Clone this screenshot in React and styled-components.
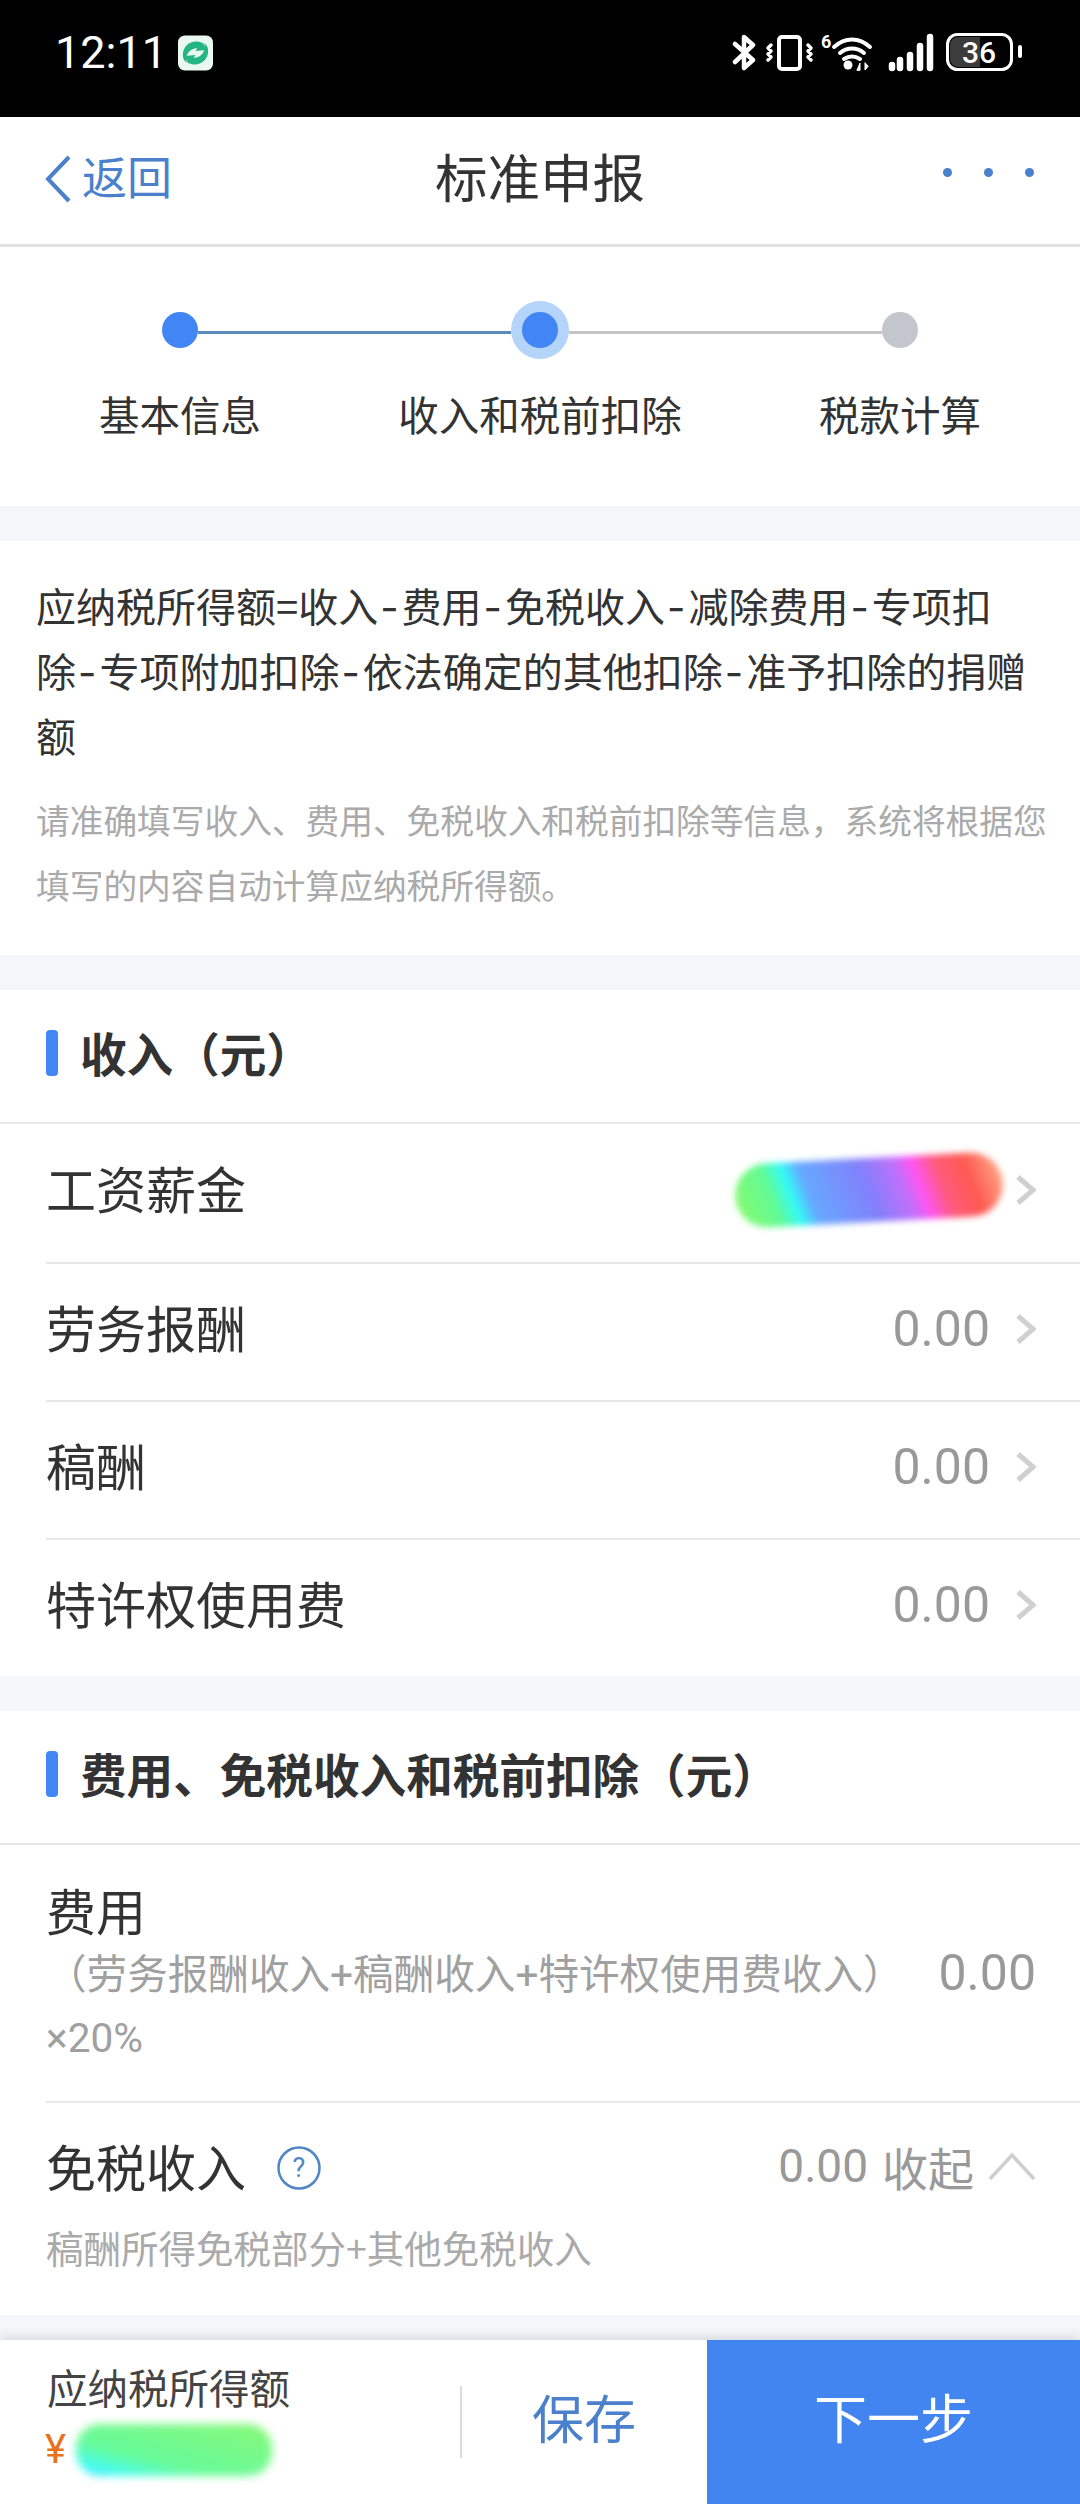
import {Fragment} from 'react'
import styled, {createGlobalStyle} from 'styled-components'

const GlobalStyle = createGlobalStyle`
  html, body {
    margin: 0;
    padding: 0;
    background: #f4f6f9;
  }
  * {
    box-sizing: border-box;
  }
`

const incomeRows = [
  {label: '工资薪金', masked: true},
  {label: '劳务报酬', value: '0.00'},
  {label: '稿酬', value: '0.00'},
  {label: '特许权使用费', value: '0.00'},
]

const formula = '应纳税所得额=收入-费用-免税收入-减除费用-专项扣除-专项附加扣除-依法确定的其他扣除-准予扣除的捐赠额'

const AppBadge = () => (
  <svg width="35" height="36" viewBox="0 0 36 36">
    <rect width="36" height="36" rx="7" fill="#eaf8f2" />
    <path d="M26 8C16 3 5 9 5 20c0 3 1 6 4 8-2-7 2-15 11-15l-2 3 11-1z" fill="#25b585" />
    <path d="M26 8C16 3 5 9 5 20c0 3 1 6 4 8-2-7 2-15 11-15l-2 3 11-1z" fill="#25b585" transform="rotate(180 18 18)" />
  </svg>
)

const StatusIcons = () => (
  <svg width="292" height="42" viewBox="0 0 292 42" fill="none" stroke="#fff" strokeLinecap="round" strokeLinejoin="round">
    {/* bluetooth */}
    <path d="M3 12l18 16-9 8V5l9 8L3 30" strokeWidth="4.5" />
    {/* vibrate */}
    <rect x="47" y="5" width="21" height="32" rx="3" strokeWidth="4" />
    <path d="M39 13l-3 3 3 3-3 3 3 3-3 3M76 13l3 3-3 3 3 3-3 3 3 3" strokeWidth="3.5" />
    {/* wifi 6 */}
    <text x="89" y="16" fill="#fff" stroke="none" fontSize="18" fontWeight="700" fontFamily="Roboto, sans-serif">6</text>
    <path d="M102 15c11-10 25-10 36 0M108 21c7-6 17-6 24 0M112 27c5-3 11-3 16 0" strokeWidth="4" />
    <circle cx="116" cy="33" r="4.5" fill="#fff" stroke="none" />
    <path d="M125 38l3-7v7zM133 31v7l3-3.5z" fill="#fff" strokeWidth="1" />
    {/* signal */}
    <path d="M160 33v3M168 28v8M178 23v13M188 14v22M198 5v31" strokeWidth="6.5" />
    {/* battery */}
    <rect x="215.5" y="2.5" width="64" height="35" rx="10" strokeWidth="3" />
    <path d="M226 5h22v30h-22a8 8 0 0 1-8-8V13a8 8 0 0 1 8-8z" fill="#3c3c3c" stroke="none" />
    <text x="230" y="31" fill="#fff" stroke="none" fontSize="30" fontWeight="500" fontFamily="Roboto, sans-serif">36</text>
    <path d="M288 15v9" strokeWidth="4" />
  </svg>
)

const BackIcon = () => (
  <svg width="28" height="48" viewBox="0 0 28 48" fill="none" stroke="#4a80cc" strokeWidth="4">
    <path d="M25 2L4 24l21 22" />
  </svg>
)

const Chevron = () => (
  <svg width="20" height="32" viewBox="0 0 20 32" fill="none" stroke="#d0d0d0" strokeWidth="5">
    <path d="M2 3l15 13L2 29" />
  </svg>
)

const ChevronUp = () => (
  <svg width="48" height="30" viewBox="0 0 48 30" fill="none" stroke="#cfcfcf" strokeWidth="3.5">
    <path d="M2 28L24 4l22 24" />
  </svg>
)

const HelpIcon = () => (
  <svg width="44" height="44" viewBox="0 0 44 44">
    <circle cx="22" cy="22" r="20.5" fill="none" stroke="#4f86c6" strokeWidth="2.5" />
    <text x="22" y="31" textAnchor="middle" fill="#4f86c6" fontSize="27" fontFamily="Roboto, sans-serif">?</text>
  </svg>
)

export default function App() {
  return (
    <Page>
      <GlobalStyle />
      <StatusBar>
        <Clock>
          <Time>12:11</Time>
          <AppBadge />
        </Clock>
        <StatusIcons />
      </StatusBar>

      <NavBar>
        <BackLink>
          <BackIcon />
          <span>返回</span>
        </BackLink>
        <NavTitle>标准申报</NavTitle>
        <MoreDots>
          <Dot />
          <Dot />
          <Dot />
        </MoreDots>
      </NavBar>

      <Steps>
        <StepTrack>
          <StepDot />
          <StepLine $done />
          <StepCurrent>
            <StepDot />
          </StepCurrent>
          <StepLine />
          <StepDot $idle />
        </StepTrack>
        <StepLabels>
          <span>基本信息</span>
          <span>收入和税前扣除</span>
          <span>税款计算</span>
        </StepLabels>
      </Steps>

      <Formula>
        <FormulaText>
          {formula.split('-').map((part, i) => (
            <Fragment key={part}>
              {i > 0 && <Dash>-</Dash>}
              {part}
            </Fragment>
          ))}
        </FormulaText>
        <FormulaHint>
          请准确填写收入、费用、免税收入和税前扣除等信息，系统将根据您填写的内容自动计算应纳税所得额。
        </FormulaHint>
      </Formula>

      <Section>
        <SectionHead>
          <SectionMark />
          <h3>收入（元）</h3>
        </SectionHead>
        {incomeRows.map((row) => (
          <Row key={row.label}>
            <RowLabel>{row.label}</RowLabel>
            <RowRight>
              {row.masked ? <RowScribble /> : <RowValue>{row.value}</RowValue>}
              <Chevron />
            </RowRight>
          </Row>
        ))}
      </Section>

      <Section>
        <SectionHead>
          <SectionMark />
          <h3>费用、免税收入和税前扣除（元）</h3>
        </SectionHead>
        <CostRow>
          <CostText>
            <RowLabel>费用</RowLabel>
            <CostNote>（劳务报酬收入+稿酬收入+特许权使用费收入）×20%</CostNote>
          </CostText>
          <CostValue>0.00</CostValue>
        </CostRow>
        <FreeRow>
          <FreeTop>
            <FreeLabel>
              <RowLabel>免税收入</RowLabel>
              <HelpIcon />
            </FreeLabel>
            <FreeRight>
              <FreeValue>0.00</FreeValue>
              <span>收起</span>
              <ChevronUp />
            </FreeRight>
          </FreeTop>
          <FreeNote>稿酬所得免税部分+其他免税收入</FreeNote>
        </FreeRow>
      </Section>

      <Footer>
        <Total>
          <TotalLabel>应纳税所得额</TotalLabel>
          <TotalAmount>
            <Yen>¥</Yen>
            <TotalScribble />
          </TotalAmount>
        </Total>
        <SaveButton>
          <span>保存</span>
        </SaveButton>
        <NextButton>下一步</NextButton>
      </Footer>
    </Page>
  )
}

const Page = styled.div`
  display: flex;
  flex-direction: column;
  width: 1080px;
  height: 2504px;
  overflow: hidden;
  background: #f4f6f9;
  color: #333;
  font-family: "Noto Sans CJK SC", "Noto Sans", sans-serif;
`

const StatusBar = styled.div`
  display: flex;
  justify-content: space-between;
  align-items: flex-start;
  flex: 0 0 117px;
  padding: 32px 56px 0 55px;
  background: #000;
  color: #fff;
`

const Clock = styled.div`
  display: flex;
  align-items: center;
  gap: 11px;
`

const Time = styled.span`
  font-family: Roboto, sans-serif;
  font-size: 45px;
  line-height: 42px;
`

const NavBar = styled.div`
  display: flex;
  justify-content: space-between;
  align-items: center;
  flex: 0 0 130px;
  padding: 0 46px 4px 44px;
  background: #fff;
  border-bottom: 3px solid #e3e3e3;
`

const BackLink = styled.div`
  display: flex;
  align-items: center;
  gap: 10px;
  width: 240px;
  color: #4a80cc;
  font-size: 45px;
  line-height: 60px;

  span {
    padding-bottom: 6px;
  }
`

const NavTitle = styled.h1`
  margin: 0 0 8px 2px;
  font-size: 52.5px;
  font-weight: 400;
  line-height: 70px;
`

const MoreDots = styled.div`
  display: flex;
  justify-content: flex-end;
  gap: 32px;
  width: 240px;
  margin-top: -12px;
`

const Dot = styled.i`
  width: 9px;
  height: 9px;
  border-radius: 50%;
  background: #4a80cc;
`

const Steps = styled.div`
  flex: 0 0 259px;
  padding-top: 54px;
  background: #fff;
`

const StepTrack = styled.div`
  display: flex;
  align-items: center;
  height: 58px;
  padding: 0 162px;
`

const StepDot = styled.i`
  flex: none;
  width: 36px;
  height: 36px;
  border-radius: 50%;
  background: ${(p) => (p.$idle ? '#c3c6cc' : '#4285f4')};
`

const StepCurrent = styled.div`
  display: flex;
  flex: none;
  justify-content: center;
  align-items: center;
  width: 58px;
  height: 58px;
  border-radius: 50%;
  background: #b5d4f9;
`

const StepLine = styled.i`
  flex: 1;
  height: 3px;
  margin-top: 4px;
  background: ${(p) => (p.$done ? '#5a89bd' : '#c4c4c4')};
`

const StepLabels = styled.div`
  display: grid;
  grid-template-columns: repeat(3, 1fr);
  margin-top: 25px;
  font-size: 40.5px;
  line-height: 60px;
  text-align: center;
`

const Formula = styled.div`
  margin-top: 35px;
  padding: 32px 32px 38px 36px;
  background: #fff;
`

const FormulaText = styled.p`
  margin: 0;
  padding-right: 8px;
  font-size: 40px;
  line-height: 65px;
`

const Dash = styled.span`
  padding-left: 2px;
  font-family: Inter, sans-serif;
  letter-spacing: 3px;
  line-height: 1;
`

const FormulaHint = styled.p`
  margin: 19px 0 0;
  color: #aaa;
  font-size: 33.7px;
  line-height: 65px;
`

const Section = styled.div`
  margin-top: 35px;
  background: #fff;
`

const SectionHead = styled.div`
  display: flex;
  align-items: center;
  gap: 22px;
  height: 134px;
  padding: 0 0 6px 46px;
  border-bottom: 2px solid #e8e8e8;

  h3 {
    margin: 0;
    padding-bottom: 3px;
    font-size: 46.6px;
    font-weight: 700;
    line-height: 60px;
  }
`

const SectionMark = styled.i`
  width: 12px;
  height: 46px;
  border-radius: 4px;
  background: #4285f4;
`

const Row = styled.div`
  display: flex;
  justify-content: space-between;
  align-items: center;
  height: 138px;
  margin-left: 46px;
  padding: 0 44px 6px 0;
  border-top: 2px solid #e8e8e8;

  &:nth-child(2) {
    border-top: 0;
  }
`

const RowLabel = styled.div`
  padding-bottom: 6px;
  font-size: 50px;
  line-height: 64px;
`

const RowRight = styled.div`
  display: flex;
  align-items: center;
  gap: 26px;
`

const RowValue = styled.div`
  color: #999;
  font-family: Roboto, sans-serif;
  font-size: 50px;
  line-height: 64px;
`

const RowScribble = styled.div`
  width: 268px;
  height: 64px;
  margin-right: -13px;
  border-radius: 32px;
  filter: blur(3px);
  transform: rotate(-3deg);
  background: linear-gradient(
    72deg,
    #8cf96a 0%,
    #62fb94 16%,
    #33fbf7 23%,
    #66a8ff 29%,
    #8280fb 50%,
    #c070fb 62%,
    #ff55f2 68%,
    #ff5a7a 76%,
    #ff5a50 86%,
    #ff9c80 96%,
    #fff080 100%
  );
`

const CostRow = styled.div`
  display: flex;
  justify-content: space-between;
  height: 256px;
  margin-left: 46px;
  padding: 32px 44px 0 0;
`

const CostText = styled.div`
  width: 866px;
`

const CostNote = styled.div`
  margin-top: -3px;
  color: #a0a0a0;
  font-family: Roboto, "Noto Sans CJK SC", sans-serif;
  font-size: 40.6px;
  line-height: 63px;
`

const CostValue = styled.div`
  margin-top: 64px;
  color: #999;
  font-family: Roboto, sans-serif;
  font-size: 50px;
  line-height: 64px;
`

const FreeRow = styled.div`
  height: 214px;
  margin-left: 46px;
  padding: 30px 44px 0 0;
  border-top: 2px solid #e8e8e8;
`

const FreeTop = styled.div`
  display: flex;
  justify-content: space-between;
  align-items: center;
`

const FreeLabel = styled.div`
  display: flex;
  align-items: center;
  gap: 31px;
`

const FreeRight = styled.div`
  display: flex;
  align-items: center;
  gap: 14px;
  padding-bottom: 4px;
  color: #999;
  font-size: 46px;
`

const FreeValue = styled.div`
  font-family: Roboto, sans-serif;
  font-size: 46px;
  line-height: 64px;
`

const FreeNote = styled.div`
  margin-top: 19px;
  color: #aaa;
  font-size: 37.5px;
  line-height: 50px;
`

const Footer = styled.div`
  display: flex;
  flex: 0 0 164px;
  margin-top: auto;
  background: #fff;
  box-shadow: 0 -3px 10px rgba(60, 70, 90, 0.16);
`

const Total = styled.div`
  width: 460px;
  padding: 19px 0 0 47px;
`

const TotalLabel = styled.div`
  color: #444;
  font-size: 40.5px;
  line-height: 56px;
`

const TotalAmount = styled.div`
  display: flex;
  align-items: center;
  gap: 10px;
  margin-top: 7px;
  margin-left: -2px;
`

const Yen = styled.span`
  color: #e8721c;
  font-family: Roboto, sans-serif;
  font-size: 40px;
  line-height: 56px;
`

const TotalScribble = styled.div`
  width: 196px;
  height: 52px;
  border-radius: 24px;
  filter: blur(4px);
  background: linear-gradient(
    to top right,
    #6ea8f8 0%,
    #40fbfb 10%,
    #66fb9a 34%,
    #88f877 100%
  );
`

const SaveButton = styled.div`
  display: flex;
  flex: 1;
  align-items: center;
  justify-content: center;
  color: #4a80cc;
  font-size: 52px;

  &::before {
    content: '';
    width: 2px;
    height: 72px;
    margin-right: auto;
    background: #dcdcdc;
  }

  span {
    margin-right: 71px;
    padding-bottom: 12px;
  }
`

const NextButton = styled.div`
  display: flex;
  flex: 0 0 373px;
  align-items: center;
  justify-content: center;
  padding-bottom: 12px;
  background: #4285f1;
  color: #fff;
  font-size: 53px;
`
